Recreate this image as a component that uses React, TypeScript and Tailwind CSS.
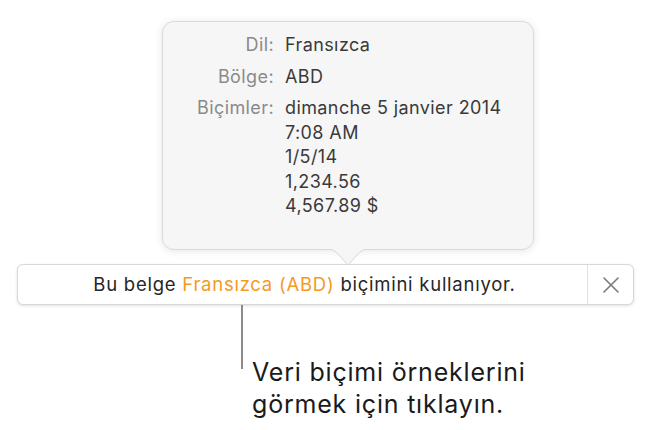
import React from 'react';

const font = { fontFamily: 'Inter, Roboto, "Noto Sans", sans-serif' };

const rows = [
  { label: 'Dil:', values: ['Fransızca'] },
  { label: 'Bölge:', values: ['ABD'] },
  { label: 'Biçimler:', values: ['dimanche 5 janvier 2014', '7:08 AM', '1/5/14', '1,234.56', '4,567.89 $'] },
];

function Popover() {
  return (
    <div className="relative ml-[162px] mt-[21px] w-[372px] h-[229px] rounded-[12px] bg-[#f6f6f6] border border-[#dadada] shadow-[0_1px_8px_rgba(0,0,0,0.10)]">
      <div className="grid grid-cols-[111px_1fr] gap-x-[11px] gap-y-[7px] pt-[11px] text-[18px] leading-[24.5px] tracking-[0.4px]">
        {rows.map((r) => (
          <React.Fragment key={r.label}>
            <div className="text-right text-[#8a8a8a]">{r.label}</div>
            <div className="text-[#3a3a3a]">
              {r.values.map((v) => (
                <div key={v}>{v}</div>
              ))}
            </div>
          </React.Fragment>
        ))}
      </div>
      {/* arrow */}
      <svg className="absolute left-[161px] top-[226px]" width="48" height="19" viewBox="0 0 48 19">
        <path d="M0 1 C8 1 10 2 14 6 L24 17 L34 6 C38 2 40 1 48 1" fill="#f6f6f6" stroke="#d6d6d6" strokeWidth="1" />
        <rect x="0" y="-2" width="48" height="3" fill="#f6f6f6" />
      </svg>
    </div>
  );
}

function Bar() {
  return (
    <div className="ml-[17px] mt-[14px] w-[617px] h-[41px] flex items-stretch rounded-[6px] bg-white border border-[#d7d7d7] shadow-[0_1px_3px_rgba(0,0,0,0.12)]">
      <div className="flex-1 flex items-center justify-center text-[18.5px] tracking-[0.75px] text-[#262626] pl-[4px]">
        <span>
          Bu belge <span className="text-[#f39a1f]">Fransızca (ABD)</span> biçimini kullanıyor.
        </span>
      </div>
      <div className="w-px bg-[#e0e0e0]" />
      <div className="w-[45px] flex items-center justify-center">
        <svg width="16" height="16" viewBox="0 0 16 16">
          <path d="M1 1 L15 15 M15 1 L1 15" stroke="#7a7a7a" strokeWidth="1.6" strokeLinecap="round" />
        </svg>
      </div>
    </div>
  );
}

export default function App() {
  return (
    <div className="w-[657px] h-[430px] bg-white overflow-hidden" style={font}>
      <Popover />
      <Bar />
      <div className="flex ml-[241px]">
        <div className="w-[2px] h-[64px] bg-[#8c8c8c]" />
        <div className="ml-[9px] mt-[51px] text-[25px] leading-[32px] tracking-[0.8px] text-[#1a1a1a]">
          Veri biçimi örneklerini
          <br />
          görmek için tıklayın.
        </div>
      </div>
    </div>
  );
}
